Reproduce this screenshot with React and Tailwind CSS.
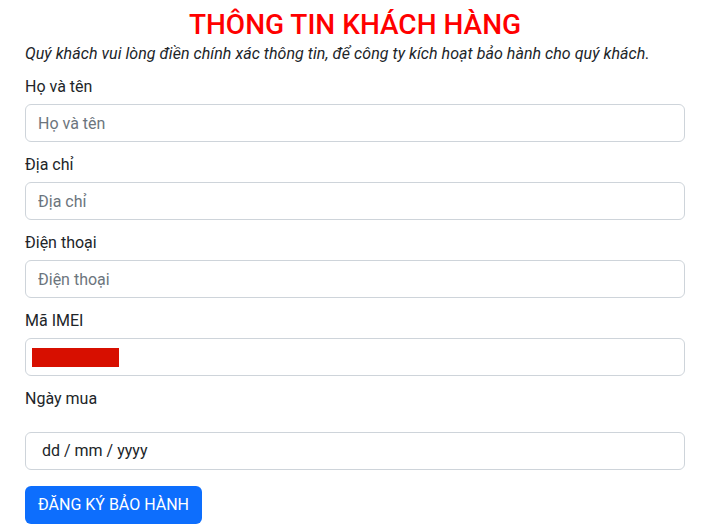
export default function App() {
    const fields = [
        { label: 'Họ và tên', placeholder: 'Họ và tên' },
        { label: 'Địa chỉ', placeholder: 'Địa chỉ' },
        { label: 'Điện thoại', placeholder: 'Điện thoại' },
    ];

    return (
        <div className="min-h-[531px] bg-white pl-[25px] pr-[22px] pt-[7px] font-['Roboto',sans-serif] text-[#212529] text-base">
            {/* Header */}
            <h2 className="text-center text-[28px] leading-[35px] font-medium text-[#ff0000]">THÔNG TIN KHÁCH HÀNG</h2>
            <p className="italic leading-6 tracking-[0.05px]">Quý khách vui lòng điền chính xác thông tin, để công ty kích hoạt bảo hành cho quý khách.</p>

            <form className="mt-[9px]" onSubmit={(e) => e.preventDefault()}>
                {fields.map((field) => (
                    <div key={field.label} className="mb-[11px]">
                        <label className="block leading-6 mb-[5px]">{field.label}</label>
                        <input
                            type="text"
                            placeholder={field.placeholder}
                            className="block w-full h-[38px] px-3 border border-[#ced4da] rounded-md bg-white placeholder:text-[#6c757d] focus:outline-none"
                        />
                    </div>
                ))}

                {/* IMEI - redacted */}
                <div className="mb-[11px]">
                    <label className="block leading-6 mb-[5px]">Mã IMEI</label>
                    <div className="flex items-center w-full h-[38px] pl-[6px] border border-[#ced4da] rounded-md bg-white">
                        <div className="w-[87px] h-[19px] bg-[#d70f00]"></div>
                    </div>
                </div>

                <div>
                    <label className="block leading-6 mb-[21px]">Ngày mua</label>
                    <div className="flex items-center w-full h-[38px] pl-4 border border-[#ced4da] rounded-md bg-white">
                        dd / mm / yyyy
                    </div>
                </div>

                <button
                    type="submit"
                    className="mt-4 h-[38px] w-[177px] rounded-md bg-[#0d6efd] text-white leading-6"
                >
                    ĐĂNG KÝ BẢO HÀNH
                </button>
            </form>
        </div>
    );
}
